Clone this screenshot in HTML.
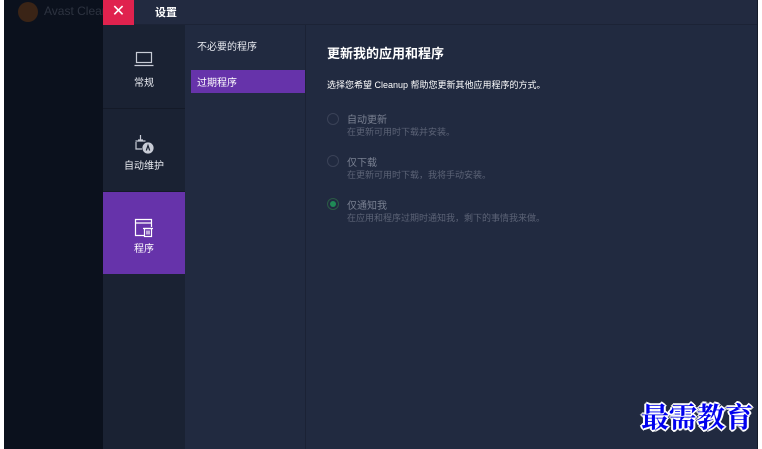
<!DOCTYPE html>
<html><head><meta charset="utf-8"><style>
*{margin:0;padding:0;box-sizing:border-box}
body{width:762px;height:449px;background:#fff;position:relative;overflow:hidden;font-family:"Liberation Sans","Noto Sans CJK SC",sans-serif}
.a{position:absolute}
.t{color:#e8eaf0;font-size:10px}
</style></head><body>
<div class="a" style="left:4px;top:0;width:754px;height:449px;background:#0b111d"></div>
<div class="a" style="left:18px;top:2px;width:20px;height:20px;border-radius:50%;background:#3a2416"></div>
<div class="a" style="left:44px;top:4px;color:#2d3340;font-size:12px">Avast Clean</div>
<div class="a" style="left:103px;top:0;width:31px;height:25px;background:#e0224e;color:#fff;font-size:16px;text-align:center;line-height:24px">✕</div>
<div class="a" style="left:134px;top:0;width:623px;height:25px;background:#222a40;border-bottom:1px solid #1c2336"></div>
<div class="a" style="left:155px;top:4px;color:#fff;font-size:11px;font-weight:bold">设置</div>
<div class="a" style="left:103px;top:25px;width:82px;height:424px;background:#1a2233"></div>
<div class="a" style="left:103px;top:108px;width:82px;height:1px;background:#141a28"></div>
<div class="a" style="left:103px;top:191px;width:82px;height:1px;background:#141a28"></div>
<div class="a" style="left:103px;top:192px;width:82px;height:82px;background:#6633aa"></div>
<div class="a" style="left:185px;top:25px;width:120px;height:424px;background:#212a40"></div>
<div class="a" style="left:305px;top:25px;width:1px;height:424px;background:#1b2235"></div>
<div class="a" style="left:306px;top:25px;width:451px;height:424px;background:#212a40"></div>
<div class="a" style="left:757px;top:0;width:1px;height:449px;background:#141a28"></div>
<svg class="a" style="left:134px;top:51px" width="20" height="17" viewBox="0 0 20 17" fill="none" stroke="#c8ccd6" stroke-width="1.2"><rect x="2.5" y="1.5" width="15" height="10"/><path d="M0.5 14.5h19"/></svg>
<div class="a t" style="left:103px;top:74px;width:82px;text-align:center">常规</div>
<svg class="a" style="left:134px;top:134px" width="22" height="20" viewBox="0 0 22 20" fill="none" stroke="#c8ccd6" stroke-width="1.2"><path d="M6.5 1v5M4 6h5M1.5 7h10M2 8v7h6"/><circle cx="14" cy="14" r="5" fill="#c8ccd6"/><path d="M12.3 16.5l1.7-5 1.7 5" stroke="#1a2233"/></svg>
<div class="a t" style="left:103px;top:157px;width:82px;text-align:center">自动维护</div>
<svg class="a" style="left:134px;top:218px" width="20" height="20" viewBox="0 0 20 20" fill="none" stroke="#fff" stroke-width="1.2"><path d="M10 17.5H1.5V1.5h16V9M1.5 5h16"/><rect x="10.5" y="10.5" width="7" height="8"/><path d="M9 10.5h10M13 12.5v4M15 12.5v4"/></svg>
<div class="a t" style="left:103px;top:240px;width:82px;text-align:center;color:#fff">程序</div>
<div class="a t" style="left:197px;top:38px">不必要的程序</div>
<div class="a" style="left:191px;top:70px;width:114px;height:23px;background:#6633aa"></div>
<div class="a t" style="left:197px;top:74px;color:#fff">过期程序</div>
<div class="a" style="left:327px;top:43px;color:#fff;font-size:13px;font-weight:bold">更新我的应用和程序</div>
<div class="a" style="left:327px;top:78px;color:#fff;font-size:9px">选择您希望 Cleanup 帮助您更新其他应用程序的方式。</div>
<div class="a" style="left:327px;top:113px;width:12px;height:12px;border-radius:50%;border:1px solid #3a4257"></div>
<div class="a" style="left:347px;top:111px;color:#7a8192;font-size:10px">自动更新</div>
<div class="a" style="left:347px;top:125px;color:#5c6376;font-size:9px">在更新可用时下载并安装。</div>
<div class="a" style="left:327px;top:155px;width:12px;height:12px;border-radius:50%;border:1px solid #3a4257"></div>
<div class="a" style="left:347px;top:154px;color:#7a8192;font-size:10px">仅下载</div>
<div class="a" style="left:347px;top:168px;color:#5c6376;font-size:9px">在更新可用时下载，我将手动安装。</div>
<div class="a" style="left:327px;top:198px;width:12px;height:12px;border-radius:50%;border:1px solid #2a5a44"></div>
<div class="a" style="left:330px;top:201px;width:6px;height:6px;border-radius:50%;background:#1f8a56"></div>
<div class="a" style="left:347px;top:197px;color:#7a8192;font-size:10px">仅通知我</div>
<div class="a" style="left:347px;top:211px;color:#5c6376;font-size:9px">在应用和程序过期时通知我，剩下的事情我来做。</div>
<div class="a" style="left:641px;top:398px;color:#0000ee;font-size:28px;line-height:36px;font-weight:bold;font-family:'Noto Serif CJK SC',serif;text-shadow:0 0 2px #fff,1px 1px 0 #fff,-1px -1px 0 #fff,1px -1px 0 #fff,-1px 1px 0 #fff,2px 0 0 #fff,-2px 0 0 #fff,0 2px 0 #fff,0 -2px 0 #fff">最需教育</div>
</body></html>
